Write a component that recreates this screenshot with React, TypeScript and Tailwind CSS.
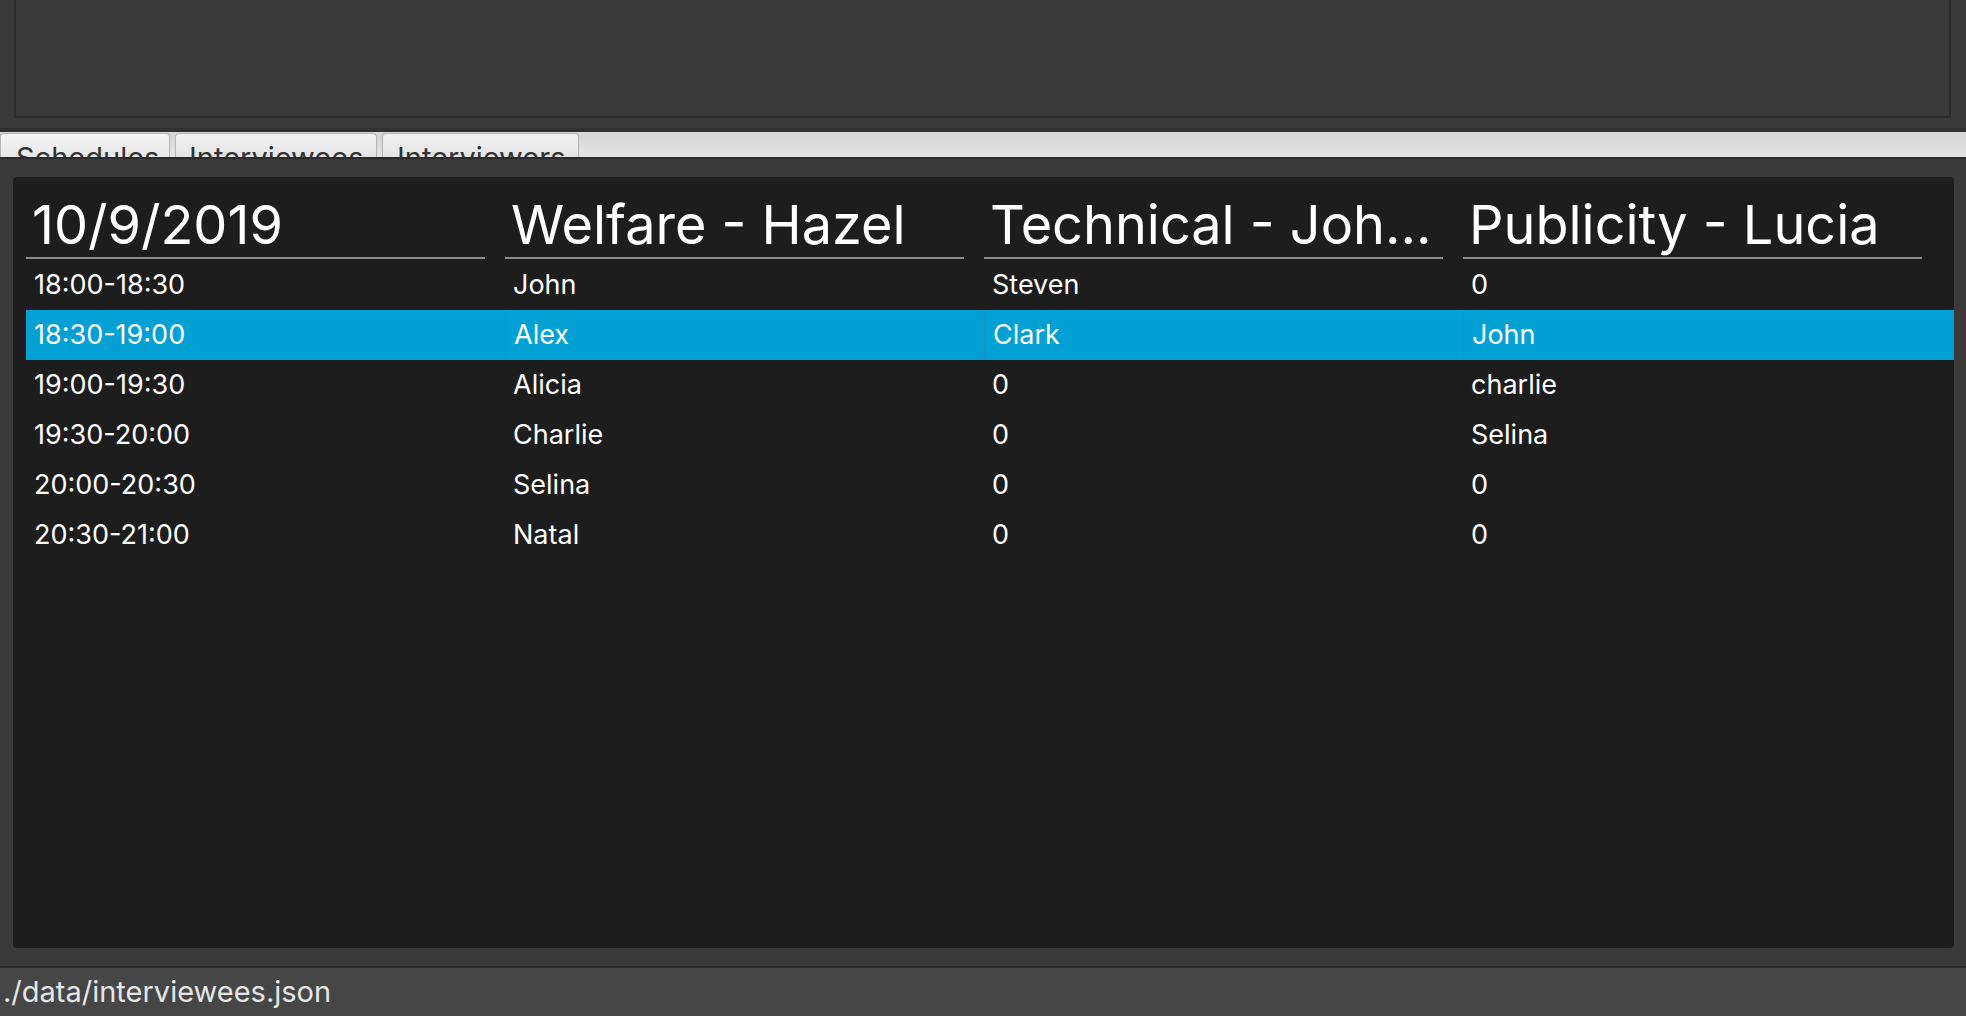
import React from "react";

const rows = [
  ["18:00-18:30", "John", "Steven", "0"],
  ["18:30-19:00", "Alex", "Clark", "John"],
  ["19:00-19:30", "Alicia", "0", "charlie"],
  ["19:30-20:00", "Charlie", "0", "Selina"],
  ["20:00-20:30", "Selina", "0", "0"],
  ["20:30-21:00", "Natal", "0", "0"],
];

const headers = ["10/9/2019", "Welfare - Hazel", "Technical - Joh...", "Publicity - Lucia"];

export default function App() {
  return (
    <div className="w-[1966px] h-[1016px] bg-[#3a3a3a] flex flex-col overflow-hidden font-['Inter',sans-serif]">
      {/* top box */}
      <div className="h-[128px] pl-[14px] pr-[15px]">
        <div className="h-[118px] border-x-2 border-b-2 border-[#2b2b2b] bg-[#393939]" />
      </div>
      <div className="h-[4px] bg-[#303030]" />

      {/* tab bar, labels cut off by the content below */}
      <div className="h-[25px] bg-gradient-to-b from-[#d4d4d4] to-[#e4e4e4] flex items-end gap-[5px] overflow-hidden">
        <div className="w-[170px] h-[24px] bg-gradient-to-b from-[#f6f6f6] to-[#e8e8e8] border border-b-0 border-[#b4b4b4] rounded-t-[4px] pl-[15px] pt-[6px] text-[29px] leading-[36px] text-[#333] whitespace-nowrap">
          Schedules
        </div>
        <div className="w-[202px] h-[24px] bg-gradient-to-b from-[#f2f2f2] to-[#e4e4e4] border border-b-0 border-[#b4b4b4] rounded-t-[4px] pl-[13px] pt-[6px] text-[29px] leading-[36px] text-[#333] whitespace-nowrap">
          Interviewees
        </div>
        <div className="w-[197px] h-[24px] bg-gradient-to-b from-[#f2f2f2] to-[#e4e4e4] border border-b-0 border-[#b4b4b4] rounded-t-[4px] pl-[14px] pt-[6px] text-[29px] leading-[36px] text-[#333] whitespace-nowrap">
          Interviewers
        </div>
      </div>

      {/* content */}
      <div className="flex-1 border-t-2 border-[#2b2b2b] pt-[18px] pb-[18px] pl-[13px] pr-[12px] flex">
        <div className="flex-1 bg-[#1d1d1d] rounded-[4px] pl-[13px]">
          <div className="grid grid-cols-[repeat(4,479px)]">
            {headers.map((h) => (
              <div key={h} className="h-[82px] mr-[20px] flex items-end border-b-2 border-[#8c8c8c]">
                <div className="pl-[6px] text-[54px] leading-[64px] text-white whitespace-nowrap">{h}</div>
              </div>
            ))}
          </div>
          <div className="pt-[1px]">
            {rows.map((r, i) => (
              <div
                key={r[0]}
                className={`grid grid-cols-[repeat(4,479px)] h-[50px] ${i === 1 ? "bg-[#03a0d4]" : ""}`}
              >
                {r.map((c, j) => (
                  <div
                    key={j}
                    className={`flex items-center pl-[8px] text-[27px] text-white ${
                      i === 1 && j > 0 ? "border-l border-[#1b92c4]" : ""
                    }`}
                  >
                    {c}
                  </div>
                ))}
              </div>
            ))}
          </div>
        </div>
      </div>

      {/* status bar */}
      <div className="h-[50px] border-t-2 border-[#2a2a2a] bg-[#464646] pl-[3px] pt-[7px] text-[29px] leading-[34px] text-[#e6e6e6]">
        ./data/interviewees.json
      </div>
    </div>
  );
}
